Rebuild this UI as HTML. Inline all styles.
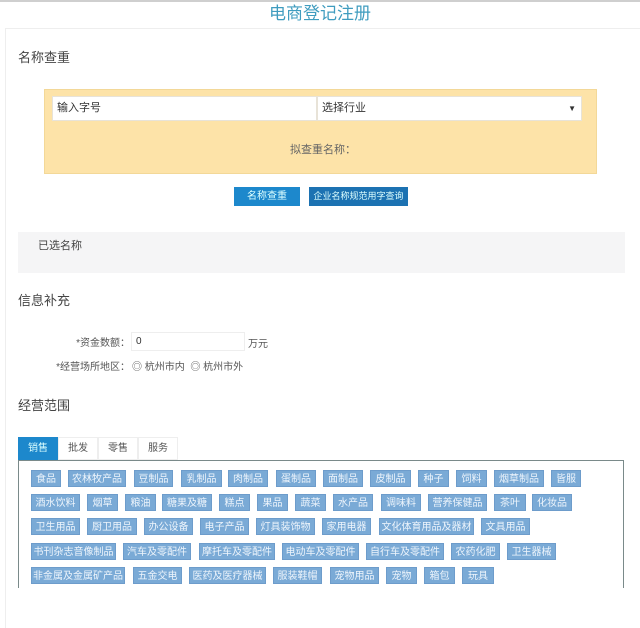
<!DOCTYPE html>
<html><head><meta charset="utf-8"><style>
*{margin:0;padding:0;box-sizing:border-box}
body{width:640px;height:613px;background:#fff;font-family:"Liberation Sans","Noto Sans CJK SC",sans-serif;position:relative;overflow:hidden;color:#555}
.a{position:absolute}
.t{position:absolute;height:17px;background:#7aaad6;color:#eef5fc;font-size:10px;line-height:17px;text-align:center;white-space:nowrap;overflow:hidden;border:1px solid #6d9ccb}
</style></head><body>
<div class="a" style="left:0;top:0;width:640px;height:2px;background:#cfcfcf"></div>
<div class="a" style="left:0;top:3px;width:640px;text-align:center;font-size:17px;color:#3f9cbf;line-height:22px">电商登记注册</div>
<div class="a" style="left:5px;top:28px;width:640px;height:600px;border-left:1px solid #eee;border-top:1px solid #eee"></div>
<div class="a" style="left:18px;top:47px;font-size:13px;color:#444">名称查重</div>
<div class="a" style="left:44px;top:89px;width:553px;height:85px;background:#fde3a8;border:1px solid #f3d898"></div>
<div class="a" style="left:52px;top:96px;width:265px;height:25px;background:#fff;border:1px solid #e8e3d8;font-size:11px;line-height:23px;padding-left:4px;color:#333">输入字号</div>
<div class="a" style="left:317px;top:96px;width:265px;height:25px;background:#fff;border:1px solid #e8e3d8;font-size:11px;line-height:23px;padding-left:4px;color:#333">选择行业<span style="position:absolute;right:5px;font-size:8px">▼</span></div>
<div class="a" style="left:290px;top:141px;font-size:11px;color:#666">拟查重名称：</div>
<div class="a" style="left:234px;top:187px;width:66px;height:19px;background:#1d88cc;color:#dff;font-size:10px;line-height:19px;text-align:center">名称查重</div>
<div class="a" style="left:309px;top:187px;width:99px;height:19px;background:#1c72b2;color:#dff;font-size:9px;line-height:19px;text-align:center;white-space:nowrap;overflow:hidden">企业名称规范用字查询</div>
<div class="a" style="left:18px;top:232px;width:607px;height:41px;background:#f5f5f6"></div>
<div class="a" style="left:38px;top:237px;font-size:11px;color:#444">已选名称</div>
<div class="a" style="left:18px;top:290px;font-size:13px;color:#444">信息补充</div>
<div class="a" style="left:60px;top:334px;width:70px;text-align:right;font-size:10px;color:#555">*资金数额：</div>
<div class="a" style="left:131px;top:332px;width:114px;height:19px;border:1px solid #eee;font-size:10px;line-height:17px;padding-left:4px;color:#333">0</div>
<div class="a" style="left:248px;top:335px;font-size:10px;color:#555">万元</div>
<div class="a" style="left:40px;top:358px;width:90px;text-align:right;font-size:10px;color:#555">*经营场所地区：</div>
<div class="a" style="left:132px;top:358px;font-size:10px;color:#555">◎ 杭州市内 &nbsp;◎ 杭州市外</div>
<div class="a" style="left:18px;top:395px;font-size:13px;color:#444">经营范围</div>
<div class="a" style="left:18px;top:437px;width:40px;height:23px;background:#1d88cc;color:#dff;font-size:10px;line-height:23px;text-align:center">销售</div>
<div class="a" style="left:58px;top:437px;width:40px;height:23px;border:1px solid #eee;font-size:10px;line-height:21px;text-align:center">批发</div>
<div class="a" style="left:98px;top:437px;width:40px;height:23px;border:1px solid #eee;font-size:10px;line-height:21px;text-align:center">零售</div>
<div class="a" style="left:138px;top:437px;width:40px;height:23px;border:1px solid #eee;font-size:10px;line-height:21px;text-align:center">服务</div>
<div class="a" style="left:18px;top:460px;width:606px;height:128px;border:1px solid #7a8a8a;border-bottom:none"></div>

<div class="t" style="left:31px;top:470px;width:30px">食品</div>
<div class="t" style="left:68px;top:470px;width:58px">农林牧产品</div>
<div class="t" style="left:134px;top:470px;width:39px">豆制品</div>
<div class="t" style="left:181px;top:470px;width:41px">乳制品</div>
<div class="t" style="left:228px;top:470px;width:40px">肉制品</div>
<div class="t" style="left:276px;top:470px;width:40px">蛋制品</div>
<div class="t" style="left:323px;top:470px;width:40px">面制品</div>
<div class="t" style="left:370px;top:470px;width:41px">皮制品</div>
<div class="t" style="left:418px;top:470px;width:31px">种子</div>
<div class="t" style="left:456px;top:470px;width:31px">饲料</div>
<div class="t" style="left:494px;top:470px;width:50px">烟草制品</div>
<div class="t" style="left:551px;top:470px;width:30px">皆服</div>

<div class="t" style="left:31px;top:494px;width:49px">酒水饮料</div>
<div class="t" style="left:87px;top:494px;width:31px">烟草</div>
<div class="t" style="left:125px;top:494px;width:31px">粮油</div>
<div class="t" style="left:162px;top:494px;width:50px">糖果及糖</div>
<div class="t" style="left:219px;top:494px;width:31px">糕点</div>
<div class="t" style="left:257px;top:494px;width:31px">果品</div>
<div class="t" style="left:295px;top:494px;width:31px">蔬菜</div>
<div class="t" style="left:333px;top:494px;width:40px">水产品</div>
<div class="t" style="left:381px;top:494px;width:40px">调味料</div>
<div class="t" style="left:428px;top:494px;width:59px">营养保健品</div>
<div class="t" style="left:494px;top:494px;width:32px">茶叶</div>
<div class="t" style="left:532px;top:494px;width:40px">化妆品</div>

<div class="t" style="left:31px;top:518px;width:49px">卫生用品</div>
<div class="t" style="left:87px;top:518px;width:50px">厨卫用品</div>
<div class="t" style="left:144px;top:518px;width:49px">办公设备</div>
<div class="t" style="left:200px;top:518px;width:49px">电子产品</div>
<div class="t" style="left:256px;top:518px;width:59px">灯具装饰物</div>
<div class="t" style="left:322px;top:518px;width:49px">家用电器</div>
<div class="t" style="left:379px;top:518px;width:95px">文化体育用品及器材</div>
<div class="t" style="left:481px;top:518px;width:49px">文具用品</div>

<div class="t" style="left:31px;top:543px;width:85px">书刊杂志音像制品</div>
<div class="t" style="left:123px;top:543px;width:68px">汽车及零配件</div>
<div class="t" style="left:199px;top:543px;width:76px">摩托车及零配件</div>
<div class="t" style="left:282px;top:543px;width:77px">电动车及零配件</div>
<div class="t" style="left:366px;top:543px;width:78px">自行车及零配件</div>
<div class="t" style="left:451px;top:543px;width:49px">农药化肥</div>
<div class="t" style="left:507px;top:543px;width:49px">卫生器械</div>

<div class="t" style="left:31px;top:567px;width:94px">非金属及金属矿产品</div>
<div class="t" style="left:133px;top:567px;width:49px">五金交电</div>
<div class="t" style="left:189px;top:567px;width:77px">医药及医疗器械</div>
<div class="t" style="left:273px;top:567px;width:49px">服装鞋帽</div>
<div class="t" style="left:330px;top:567px;width:49px">宠物用品</div>
<div class="t" style="left:386px;top:567px;width:31px">宠物</div>
<div class="t" style="left:424px;top:567px;width:31px">箱包</div>
<div class="t" style="left:462px;top:567px;width:32px">玩具</div>
</body></html>
